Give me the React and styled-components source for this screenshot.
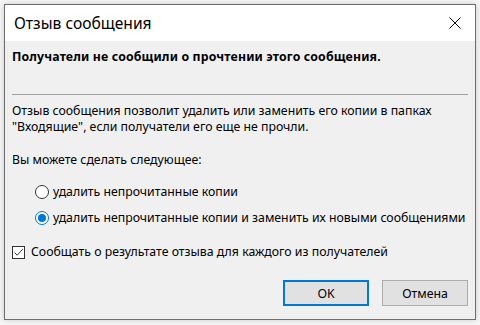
import styled, { createGlobalStyle } from "styled-components";

const GlobalStyle = createGlobalStyle`
  html, body {
    margin: 0;
    padding: 0;
    background: #f6f6f6;
  }
  body {
    font-family: "Noto Sans", "Open Sans", sans-serif;
    font-size: 12.3px;
    color: #000;
  }
`;

const Page = styled.div`
  padding: 4px 4px 5px 4px;
  width: 480px;
  height: 325px;
  box-sizing: border-box;
`;

const Window = styled.div`
  width: 472px;
  height: 316px;
  box-sizing: border-box;
  border: 1px solid #6e6e6e;
  background: #f0f0f0;
  box-shadow: 0 0 6px rgba(0, 0, 0, 0.18);
  display: flex;
  flex-direction: column;
`;

const TitleBar = styled.div`
  height: 36px;
  background: #fff;
  display: flex;
  align-items: center;
  justify-content: space-between;
  padding-left: 9px;
`;

const Title = styled.div`
  font-size: 15.6px;
  line-height: 20px;
  padding-bottom: 1px;
`;

const CloseButton = styled.div`
  width: 40px;
  height: 36px;
  display: flex;
  align-items: center;
  justify-content: center;
`;

const Body = styled.div`
  flex: 1;
  padding: 8px 7px 0 7px;
  display: flex;
  flex-direction: column;
`;

const Text = styled.div`
  line-height: 16px;
  font-weight: ${(p) => (p.$bold ? 700 : 400)};
  letter-spacing: ${(p) => (p.$bold ? "0.15px" : "0")};
  margin-top: ${(p) => p.$mt || 0}px;
`;

const Separator = styled.div`
  height: 1px;
  background: #a0a0a0;
  margin-top: 29px;
`;

const OptionRow = styled.label`
  height: 26px;
  display: flex;
  align-items: center;
  gap: 4px;
  padding-left: ${(p) => p.$indent || 0}px;
  margin-top: ${(p) => p.$mt || 0}px;
  line-height: 16px;
`;

const RadioCircle = styled.span`
  width: 14px;
  height: 14px;
  box-sizing: border-box;
  border-radius: 50%;
  border: 1px solid ${(p) => (p.$checked ? "#0078d7" : "#333")};
  background: #fff;
  display: flex;
  align-items: center;
  justify-content: center;
  flex-shrink: 0;
  &::after {
    content: "";
    width: 8px;
    height: 8px;
    border-radius: 50%;
    background: ${(p) => (p.$checked ? "#0078d7" : "transparent")};
  }
`;

const CheckBox = styled.span`
  width: 13px;
  height: 13px;
  box-sizing: border-box;
  border: 1px solid #333;
  background: #fff;
  display: flex;
  align-items: center;
  justify-content: center;
  flex-shrink: 0;
  margin-right: 2px;
`;

const ButtonRow = styled.div`
  display: flex;
  justify-content: flex-end;
  gap: 13px;
  margin-top: 15px;
`;

const Button = styled.div`
  width: 86px;
  height: 26px;
  box-sizing: border-box;
  background: #e1e1e1;
  border: ${(p) => (p.$default ? "2px solid #0078d7" : "1px solid #adadad")};
  display: flex;
  align-items: center;
  justify-content: center;
`;

export default function App() {
  return (
    <>
      <GlobalStyle />
      <Page>
        <Window>
          <TitleBar>
            <Title>Отзыв сообщения</Title>
            <CloseButton>
              <svg width="12" height="12" viewBox="0 0 12 12">
                <path d="M0.5 0.5 L11.5 11.5 M11.5 0.5 L0.5 11.5" stroke="#000" strokeWidth="1" fill="none" />
              </svg>
            </CloseButton>
          </TitleBar>
          <Body>
            <Text $bold>Получатели не сообщили о прочтении этого сообщения.</Text>
            <Separator />
            <Text $mt={8}>
              Отзыв сообщения позволит удалить или заменить его копии в папках
              <br />
              "Входящие", если получатели его еще не прочли.
            </Text>
            <Text $mt={17}>Вы можете сделать следующее:</Text>
            <OptionRow $indent={23} $mt={11}>
              <RadioCircle />
              удалить непрочитанные копии
            </OptionRow>
            <OptionRow $indent={23}>
              <RadioCircle $checked />
              удалить непрочитанные копии и заменить их новыми сообщениями
            </OptionRow>
            <OptionRow $mt={8}>
              <CheckBox>
                <svg width="11" height="11" viewBox="0 0 11 11">
                  <path d="M1.5 5.5 L4.2 8.2 L9.8 2.2" stroke="#333" strokeWidth="1" fill="none" />
                </svg>
              </CheckBox>
              Сообщать о результате отзыва для каждого из получателей
            </OptionRow>
            <ButtonRow>
              <Button $default>OK</Button>
              <Button>Отмена</Button>
            </ButtonRow>
          </Body>
        </Window>
      </Page>
    </>
  );
}
